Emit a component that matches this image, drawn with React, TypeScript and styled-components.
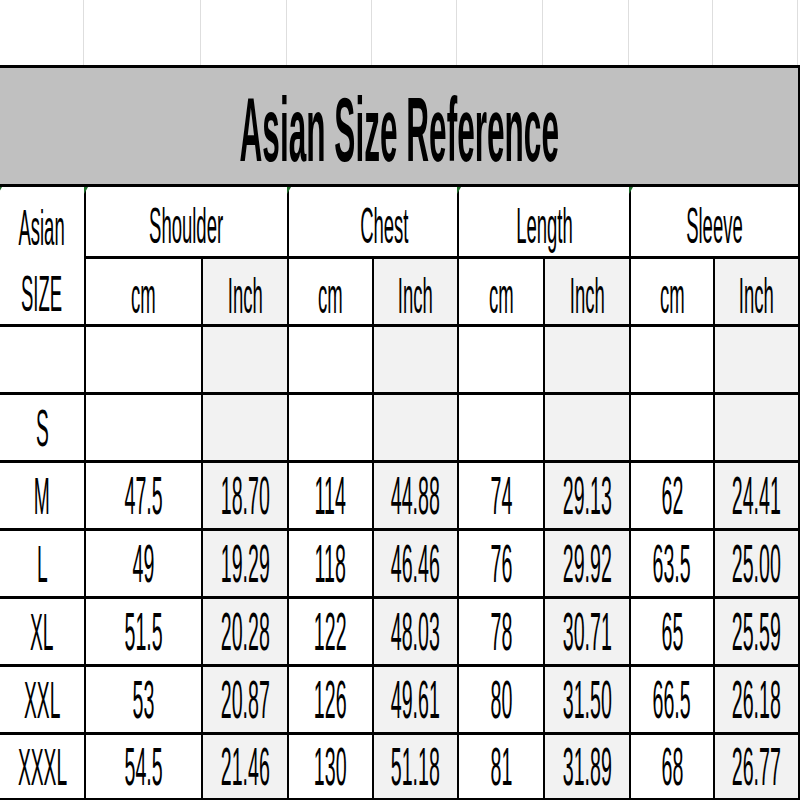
import React from 'react';
import styled, { createGlobalStyle } from 'styled-components';

const GlobalStyle = createGlobalStyle`
  html, body {
    margin: 0;
    padding: 0;
    background: #ffffff;
  }
  body {
    font-family: "Liberation Sans", Arial, sans-serif;
    color: #000;
    overflow: hidden;
  }
`;

const COLUMNS = '84px 115px 84px 83px 83px 84px 84px 82px 83px';

const Page = styled.div`
  width: 800px;
  height: 800px;
  display: flex;
  flex-direction: column;
`;

const BlankStrip = styled.div`
  height: 65px;
  display: grid;
  grid-template-columns: ${COLUMNS};
  column-gap: 2px;
  padding-right: 2px;
`;

const BlankCell = styled.div`
  border-right: 1px solid #dedede;
`;

const Table = styled.div`
  flex: 1;
  display: grid;
  grid-template-columns: ${COLUMNS};
  grid-template-rows: 116px 69px 65px repeat(6, 65px) 63px;
  column-gap: 2px;
  row-gap: 3px;
  background: #000;
  border-top: 3px solid #000;
  border-right: 2px solid #000;
  border-bottom: 2px solid #000;
`;

const TitleBand = styled.div`
  grid-column: 1 / -1;
  background: #c0c0c0;
  display: flex;
  align-items: center;
  justify-content: center;
  padding-top: 6px;
  overflow: hidden;
`;

const Title = styled.span`
  display: inline-block;
  font-size: 91px;
  font-weight: bold;
  white-space: nowrap;
  transform: scaleX(0.347);
  line-height: 1;
`;

const Cell = styled.div<{ $shade?: boolean; $span?: number; $head?: boolean; $shift?: number }>`
  position: relative;
  background: ${({ $shade }) => ($shade ? '#f2f2f2' : '#ffffff')};
  grid-column: span ${({ $span }) => $span ?? 1};
  display: flex;
  align-items: center;
  justify-content: center;
  padding-top: ${({ $head }) => ($head ? '9px' : '0')};
  padding-left: ${({ $shift }) => $shift ?? 0}px;
  box-sizing: border-box;
`;

const Marker = styled.i`
  position: absolute;
  top: 0;
  left: -2px;
  width: 0;
  height: 0;
  border-top: 7px solid #1e6b2a;
  border-right: 4px solid transparent;
`;

const SizeHead = styled.div`
  grid-row: span 2;
  background: #ffffff;
  position: relative;
  display: flex;
  flex-direction: column;
  align-items: center;
  justify-content: center;
  padding-top: 10px;
  box-sizing: border-box;
`;

const Squeeze = styled.span<{ $size?: number }>`
  display: inline-block;
  white-space: nowrap;
  font-size: ${({ $size }) => $size ?? 50}px;
  line-height: 66px;
  transform: scaleX(0.37);
`;

const groups: [string, number][] = [
  ['Shoulder', 0],
  ['Chest', 22],
  ['Length', 0],
  ['Sleeve', 0],
];

const rows: [string, string[]][] = [
  ['', ['', '', '', '', '', '', '', '']],
  ['S', ['', '', '', '', '', '', '', '']],
  ['M', ['47.5', '18.70', '114', '44.88', '74', '29.13', '62', '24.41']],
  ['L', ['49', '19.29', '118', '46.46', '76', '29.92', '63.5', '25.00']],
  ['XL', ['51.5', '20.28', '122', '48.03', '78', '30.71', '65', '25.59']],
  ['XXL', ['53', '20.87', '126', '49.61', '80', '31.50', '66.5', '26.18']],
  ['XXXL', ['54.5', '21.46', '130', '51.18', '81', '31.89', '68', '26.77']],
];

export default function App() {
  return (
    <Page>
      <GlobalStyle />
      <BlankStrip>
        {Array.from({ length: 9 }).map((_, i) => (
          <BlankCell key={i} />
        ))}
      </BlankStrip>
      <Table>
        <TitleBand>
          <Title>Asian Size Reference</Title>
        </TitleBand>

        <SizeHead>
          <Marker />
          <Squeeze>Asian</Squeeze>
          <Squeeze>SIZE</Squeeze>
        </SizeHead>
        {groups.map(([g, shift]) => (
          <Cell key={g} $span={2} $head $shift={shift}>
            <Marker />
            <Squeeze>{g}</Squeeze>
          </Cell>
        ))}
        {groups.map(([g]) => (
          <React.Fragment key={g}>
            <Cell $head>
              <Squeeze>cm</Squeeze>
            </Cell>
            <Cell $shade $head>
              <Squeeze>Inch</Squeeze>
            </Cell>
          </React.Fragment>
        ))}

        {rows.map(([size, values], r) => (
          <React.Fragment key={r}>
            <Cell>
              <Squeeze $size={52}>{size}</Squeeze>
            </Cell>
            {values.map((v, i) => (
              <Cell key={i} $shade={i % 2 === 1}>
                <Squeeze $size={53}>{v}</Squeeze>
              </Cell>
            ))}
          </React.Fragment>
        ))}
      </Table>
    </Page>
  );
}
